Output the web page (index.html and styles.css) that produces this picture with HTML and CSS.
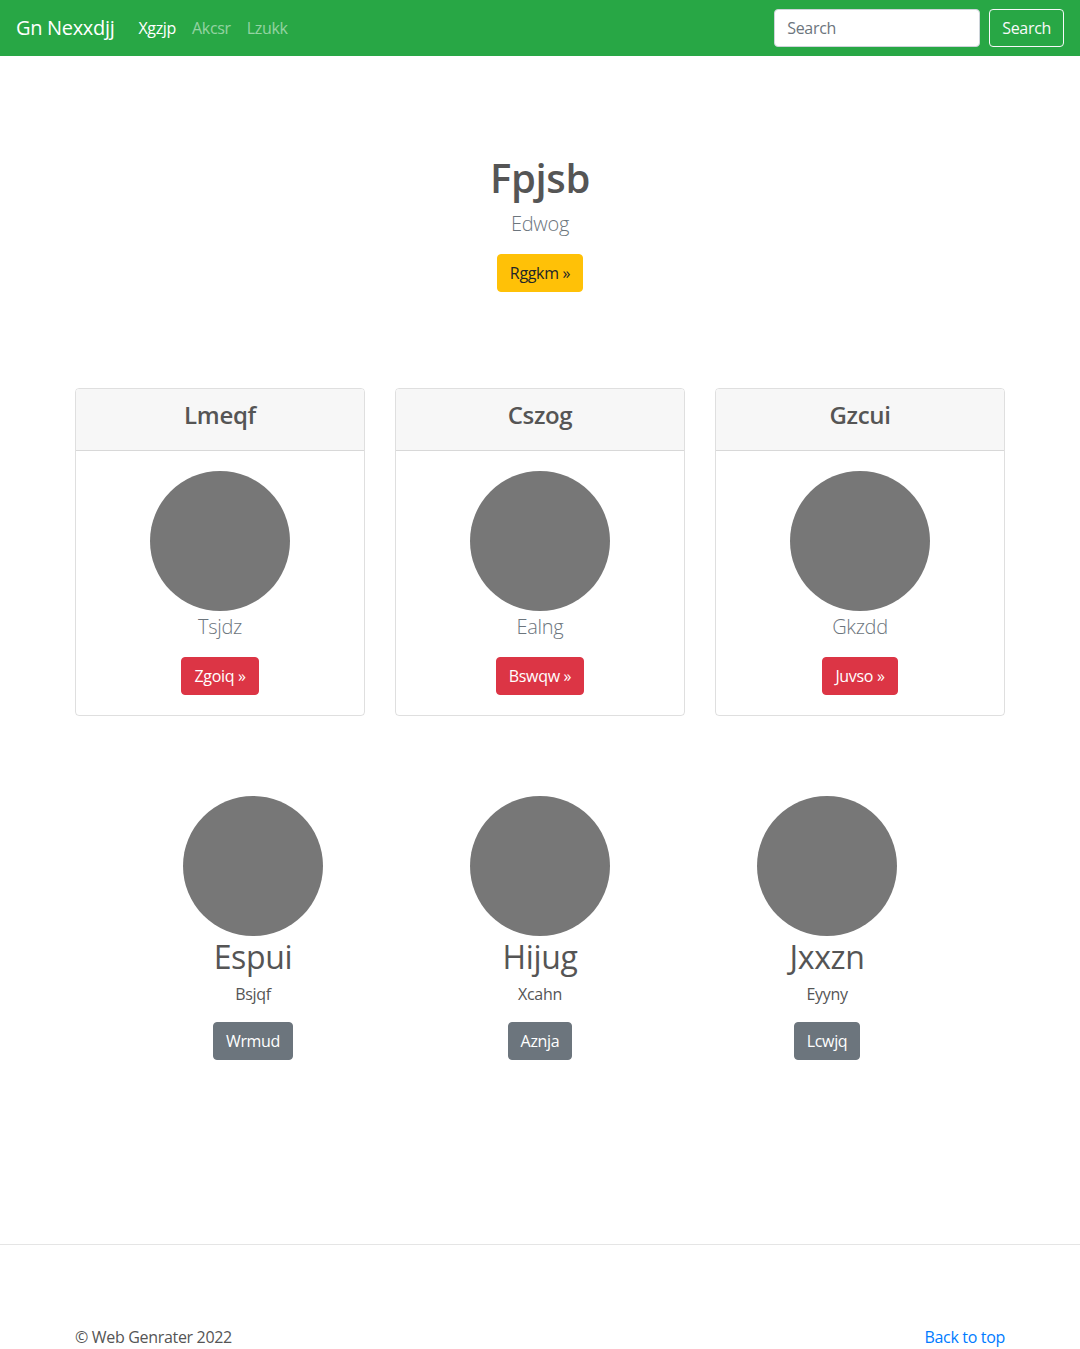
FILE: index.html
```html
<!DOCTYPE html>
<html lang="en">
<head>
<meta charset="utf-8">
<title>Gn Nexxdjj</title>
<link rel="stylesheet" href="styles.css">
</head>
<body>
<nav class="navbar">
  <a class="brand" href="#">Gn Nexxdjj</a>
  <ul class="nav">
    <li><a class="nav-link active" href="#">Xgzjp</a></li>
    <li><a class="nav-link" href="#">Akcsr</a></li>
    <li><a class="nav-link" href="#">Lzukk</a></li>
  </ul>
  <form class="search">
    <input class="search-input" type="text" placeholder="Search">
    <button class="btn btn-outline-light" type="button">Search</button>
  </form>
</nav>

<section class="hero">
  <h1 class="hero-title">Fpjsb</h1>
  <p class="lead">Edwog</p>
  <a class="btn btn-warning" href="#">Rggkm &raquo;</a>
</section>

<div class="container cards">
  <div class="card">
    <div class="card-header"><h4 class="card-title">Lmeqf</h4></div>
    <div class="card-body">
      <div class="circle"></div>
      <p class="lead card-lead">Tsjdz</p>
      <a class="btn btn-danger" href="#">Zgoiq &raquo;</a>
    </div>
  </div>
  <div class="card">
    <div class="card-header"><h4 class="card-title">Cszog</h4></div>
    <div class="card-body">
      <div class="circle"></div>
      <p class="lead card-lead">Ealng</p>
      <a class="btn btn-danger" href="#">Bswqw &raquo;</a>
    </div>
  </div>
  <div class="card">
    <div class="card-header"><h4 class="card-title">Gzcui</h4></div>
    <div class="card-body">
      <div class="circle"></div>
      <p class="lead card-lead">Gkzdd</p>
      <a class="btn btn-danger" href="#">Juvso &raquo;</a>
    </div>
  </div>
</div>

<div class="marketing">
  <div class="mk-col">
    <div class="circle"></div>
    <h2 class="mk-title">Espui</h2>
    <p class="mk-text">Bsjqf</p>
    <a class="btn btn-secondary" href="#">Wrmud</a>
  </div>
  <div class="mk-col">
    <div class="circle"></div>
    <h2 class="mk-title">Hijug</h2>
    <p class="mk-text">Xcahn</p>
    <a class="btn btn-secondary" href="#">Aznja</a>
  </div>
  <div class="mk-col">
    <div class="circle"></div>
    <h2 class="mk-title">Jxxzn</h2>
    <p class="mk-text">Eyyny</p>
    <a class="btn btn-secondary" href="#">Lcwjq</a>
  </div>
</div>

<footer class="footer">
  <div class="container footer-inner">
    <p class="copy">&copy; Web Genrater 2022</p>
    <a class="top-link" href="#">Back to top</a>
  </div>
</footer>
</body>
</html>
```
FILE: styles.css
```css
* { box-sizing: border-box; }
html, body { margin: 0; padding: 0; }
body {
  font-family: "Open Sans", "Noto Sans", sans-serif;
  font-size: 16px;
  line-height: 1.5;
  letter-spacing: -0.02em;
  color: #555;
  background: #fff;
}
a { text-decoration: none; }

.navbar {
  display: flex;
  align-items: center;
  height: 56px;
  padding: 0 16px;
  background: #28a745;
}
.brand {
  font-size: 20px;
  line-height: 30px;
  color: #fff;
  margin-right: 16px;
}
.nav {
  display: flex;
  list-style: none;
  margin: 0;
  padding: 0;
}
.nav-link {
  display: block;
  padding: 8px;
  color: rgba(255,255,255,.5);
}
.nav-link.active { color: #fff; }
.search {
  margin-left: auto;
  display: flex;
  align-items: center;
}
.search-input {
  width: 206px;
  height: 38px;
  padding: 6px 12px;
  font: inherit;
  font-size: 16px;
  letter-spacing: -0.02em;
  color: #495057;
  border: 1px solid #ced4da;
  border-radius: 4px;
  margin-right: 9px;
  background: #fff;
}
.search-input::placeholder { color: #6c757d; }

.btn {
  display: inline-block;
  font: inherit;
  font-size: 16px;
  line-height: 24px;
  letter-spacing: -0.02em;
  padding: 6px 12px;
  border: 1px solid transparent;
  border-radius: 4px;
  cursor: pointer;
}
.btn-outline-light { color: #f8f9fa; border-color: #f8f9fa; background: transparent; }
.btn-warning { color: #212529; background: #ffc107; border-color: #ffc107; }
.btn-danger { color: #fff; background: #dc3545; border-color: #dc3545; }
.btn-secondary { color: #fff; background: #6c757d; border-color: #6c757d; }

.hero {
  text-align: center;
  padding: 98px 0 96px;
}
.hero-title {
  margin: 0 0 7px;
  font-size: 40px;
  line-height: 1.2;
  font-weight: 600;
  color: #555;
}
.lead {
  font-size: 20px;
  font-weight: 300;
  line-height: 30px;
  color: #6c757d;
  margin: 0 0 15px;
}

.container {
  width: 960px;
  margin: 0 auto;
  padding: 0 15px;
}
.cards {
  display: grid;
  grid-template-columns: repeat(3, 1fr);
  column-gap: 30px;
}
.card {
  border: 1px solid rgba(0,0,0,.125);
  border-radius: 4px;
  overflow: hidden;
  text-align: center;
}
.card-header {
  background: #f7f7f7;
  border-bottom: 1px solid rgba(0,0,0,.125);
  padding: 12px 20px;
}
.card-title {
  margin: 0 0 8px;
  font-size: 24px;
  line-height: 1.2;
  font-weight: 600;
  color: #555;
}
.card-body { padding: 20px; }
.card-lead { margin: 1px 0 15px; }
.circle {
  width: 140px;
  height: 140px;
  border-radius: 50%;
  background: #777;
  margin: 0 auto;
}

.marketing {
  display: grid;
  grid-template-columns: repeat(3, 287px);
  justify-content: center;
  margin-top: 80px;
  padding-bottom: 184px;
  text-align: center;
}
.mk-title {
  margin: 2px 0 6px;
  font-size: 32px;
  line-height: 1.2;
  font-weight: 400;
  color: #555;
}
.mk-text { margin: 0 0 16px; font-size: 16px; }

.footer {
  border-top: 1px solid #e5e5e5;
  padding-top: 80px;
}
.footer-inner {
  display: flex;
  justify-content: space-between;
}
.copy { margin: 0; }
.top-link { color: #007bff; }
```
